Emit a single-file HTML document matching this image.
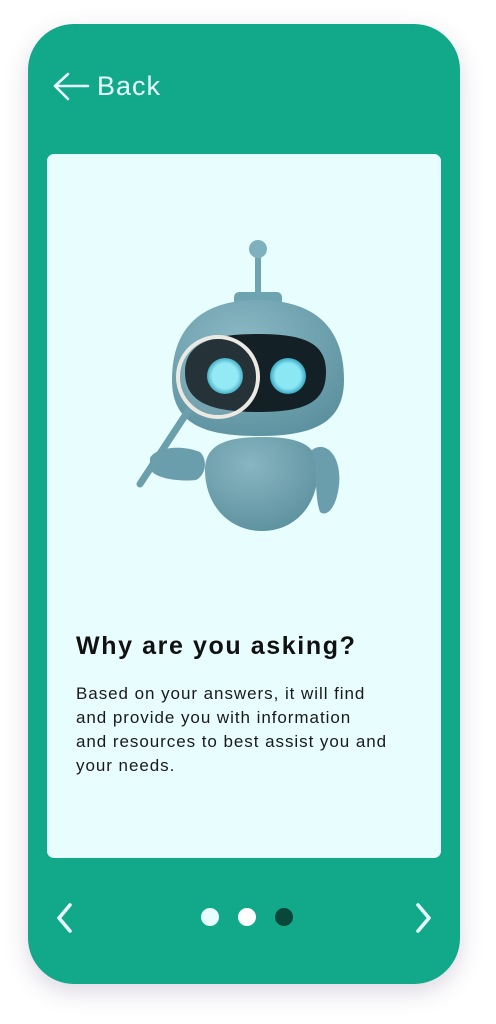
<!DOCTYPE html>
<html><head><meta charset="utf-8"><style>
html,body{margin:0;padding:0;background:#fff;}
body{width:496px;height:1024px;position:relative;overflow:hidden;font-family:"Liberation Sans",sans-serif;}
.phone{position:absolute;left:28px;top:24px;width:432px;height:960px;border-radius:46px;background:#12a98b;box-shadow:0 8px 24px rgba(60,40,90,0.18);}
.card{position:absolute;left:47px;top:154px;width:394px;height:704px;border-radius:7px;background:#e8fdfd;}
.back{position:absolute;left:97px;top:71px;color:#e8fdfd;font-size:27px;letter-spacing:1px;}
h1{position:absolute;left:76px;top:632px;margin:0;font-size:25px;font-weight:bold;color:#111;letter-spacing:1.6px;}
p{position:absolute;left:76px;top:682px;margin:0;font-size:17px;line-height:24px;color:#1a1a1a;letter-spacing:0.95px;white-space:nowrap;}
.dot{position:absolute;top:908px;width:18px;height:18px;border-radius:50%;}
</style></head><body>
<div class="phone"></div>
<svg style="position:absolute;left:52px;top:72px" width="38" height="30"><path d="M36 14H3M16 2L3 14L16 27" stroke="#e8fdfd" stroke-width="2.6" fill="none" stroke-linecap="round" stroke-linejoin="round"/></svg>
<div class="back">Back</div>
<div class="card"></div>
<svg style="position:absolute;left:0;top:0" width="496" height="600">
<defs>
<radialGradient id="hg" cx="0.4" cy="0.3" r="0.8"><stop offset="0" stop-color="#8bb9c5"/><stop offset="1" stop-color="#5a8f9d"/></radialGradient>
<radialGradient id="bg" cx="0.4" cy="0.3" r="0.8"><stop offset="0" stop-color="#88b6c2"/><stop offset="1" stop-color="#5a8e9b"/></radialGradient>
<radialGradient id="eg"><stop offset="0.7" stop-color="#8ae8f4"/><stop offset="1" stop-color="#3aa7c0"/></radialGradient>
</defs>
<rect x="255" y="252" width="6" height="44" fill="#6ea3b0"/>
<circle cx="258" cy="249" r="9" fill="#7fb0bd"/>
<rect x="234" y="292" width="48" height="14" rx="5" fill="#6ea3b0"/>
<path d="M172 380 C172 320 210 300 258 300 C306 300 344 320 344 380 C344 425 310 436 258 436 C206 436 172 425 172 380Z" fill="url(#hg)"/>
<path d="M185 372 C185 344 210 334 258 334 C306 334 326 344 326 372 C326 402 306 412 258 412 C210 412 185 402 185 372Z" fill="#132126"/>
<circle cx="225" cy="376" r="18" fill="url(#eg)"/>
<circle cx="288" cy="376" r="18" fill="url(#eg)"/>
<path d="M205 470 C205 445 225 437 262 437 C300 437 318 445 318 470 C318 505 295 531 262 531 C229 531 205 505 205 470Z" fill="url(#bg)"/>
<path d="M312 450 C325 440 342 455 339 485 C337 505 328 518 320 512 C314 495 318 470 312 450Z" fill="#6a9ead"/>
<path d="M150 458 C155 448 180 444 200 452 C208 460 206 475 196 480 C178 482 152 478 150 468Z" fill="#6a9ead"/>
<line x1="192" y1="405" x2="140" y2="484" stroke="#6c9fac" stroke-width="7" stroke-linecap="round"/>
<circle cx="218" cy="377" r="40" fill="rgba(255,255,255,0.08)" stroke="#ece9e2" stroke-width="4"/>
</svg>
<h1>Why are you asking?</h1>
<p>Based on your answers, it will find<br>and provide you with information<br>and resources to best assist you and<br>your needs.</p>
<svg style="position:absolute;left:52px;top:902px" width="24" height="32"><path d="M18 3L7 16L18 29" stroke="#e8fdfd" stroke-width="3.6" fill="none" stroke-linecap="round" stroke-linejoin="round"/></svg>
<svg style="position:absolute;left:412px;top:902px" width="24" height="32"><path d="M6 3L17 16L6 29" stroke="#e8fdfd" stroke-width="3.6" fill="none" stroke-linecap="round" stroke-linejoin="round"/></svg>
<div class="dot" style="left:201px;background:#e8fdfd"></div>
<div class="dot" style="left:238px;background:#fff"></div>
<div class="dot" style="left:275px;background:#08473a"></div>
</body></html>
